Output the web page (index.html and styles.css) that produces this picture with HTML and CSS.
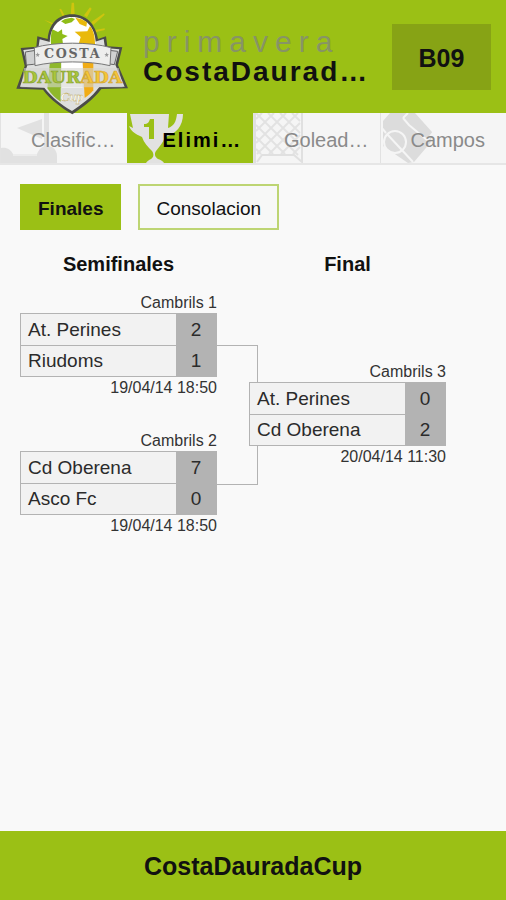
FILE: index.html
```html
<!DOCTYPE html>
<html lang="es">
<head>
<meta charset="utf-8">
<meta name="viewport" content="width=device-width, initial-scale=1">
<title>CostaDauradaCup</title>
<link rel="stylesheet" href="styles.css">
</head>
<body>
<header class="header">
  <svg class="logo" viewBox="0 0 420 345" role="img" aria-label="Costa Daurada Cup">
    <g fill="#cfc40f">
      <path d="M215 8h7l2 36h-12zM178 28l5-2 12 22-6 3zM252 46l18-24 5 4-14 26zM274 66l38-26 2 4-34 31zM286 90l28-5v5l-28 7zM132 59l34 13-3 5z"/>
    </g>
    <path d="M62 144l47-4 3-31 31 8c4-46 32-74 73-74s70 28 78 74l24-8 4 30 45 3-13 53 30 70-80 2c-24 32-58 56-87 76-33-20-66-44-88-74l-80-3 25-68z" fill="#4b4c48"/>
    <path d="M70 150l45-5 4-27 31 8h133l28-9 4 27 43 4-12 46 28 66-76 1c-23 32-56 54-82 72-31-19-61-41-83-70l-73-3 22-64z" fill="#dedfde"/>
    <path d="M149 132c0-50 27-81 67-81s71 31 71 81z" fill="#fff"/>
    <path d="M157 88l17 8 12-8 1 14 16 6-16 9 2 15h-36c-2-16 0-30 4-44zM183 64l12-7 20-4 10 4-10 10-19 5z" fill="#8fbd18"/>
    <path d="M226 53c14 2 25 6 35 14l-2 13-20-8zM270 78l-8 16-38 1 18 16-6 21h49c0-22-4-40-15-54z" fill="#e9b90b"/>
    <path d="M150 184h34v79h-2v42c-16-10-28-22-40-40z" fill="#8fb82b"/>
    <path d="M184 184h64v79h-64z" fill="#fff"/>
    <path d="M248 183h32v88c-8 10-16 17-26 23z" fill="#f1ac16"/>
    <path d="M76 156l37-6c55-24 151-24 206 0l34 4-10 40-26-4c-60-14-160-14-216 3l-22 2z" fill="#d0d1d1" stroke="#666" stroke-width="3"/>
    <path d="M103 143c61-18 167-18 230 0l-3 54c-62-15-164-15-225 0z" fill="#eeeeed" stroke="#777" stroke-width="3"/>
    <path d="M113 157l2 5 5 1-4 3 1 5-4-3-4 3 1-5-4-3 5-1zM320 157l2 5 5 1-4 3 1 5-4-3-4 3 1-5-4-3 5-1z" fill="#999"/>
    <text class="logo-costa" x="218" y="173">COSTA</text>
    <path d="M72 204h284l12 58H64z" fill="#d5d6d2" opacity=".6"/>
    <text class="logo-name" x="217" y="248"><tspan class="logo-green">DAUR</tspan><tspan class="logo-gold">ADA</tspan></text>
    <text class="logo-cup" x="216" y="302">Cup</text>
  </svg>
  <div class="heading">
    <p class="season">primavera</p>
    <h1 class="title">CostaDaurad…</h1>
  </div>
  <button class="category" type="button">B09</button>
</header>

<nav class="tabs">
  <a class="tab" href="#clasificacion">
    <svg class="tab-icon" viewBox="0 0 60 51" aria-hidden="true">
      <path d="M43 0h5v34h-5zM41 6v20L16 15zM0 35c6-1 10 2 12 6h24c2-5 5-8 10-8 6 0 10 4 10 10v8H0z" fill="#e1e1e1"/>
      <path d="M12 42h24" stroke="#ececec" stroke-width="2"/>
    </svg>
    <span>Clasific…</span>
  </a>
  <a class="tab tab-active" href="#eliminatorias" aria-current="page">
    <svg class="tab-icon" viewBox="0 0 60 51" aria-hidden="true">
      <path d="M2 1h39l-1 14c6-2 8-6 9-14h6c0 12-7 20-18 23-2 6-6 10-9 14-2 3-1 6 2 8 3 1 5 2 6 4H18c1-2 3-3 5-4 3-2 3-5 1-8-4-4-8-8-10-14C7 21 3 18 1 13l4 2z" fill="#e2e2e1"/>
      <path d="M16 11c4 0 5-2 6-5h4v20h-5V14h-5z" fill="#9bc015"/>
    </svg>
    <span>Elimi…</span>
  </a>
  <a class="tab" href="#goleadores">
    <svg class="tab-icon" viewBox="0 0 60 51" aria-hidden="true">
      <path d="M2 0l42 42M14 0l32 32M26 0l20 20M38 0l8 8M2 12l29 29M2 24l17 17M2 36l5 5M8 0L2 6M20 0L2 18M32 0L2 30M44 0L3 41M46 10L15 41M46 22L27 41M46 34l-7 7" fill="none" stroke="#e2e2e2" stroke-width="2"/>
      <path d="M1 0v51M48 0v49l-8-7H8l-5 7" fill="none" stroke="#e0e0e0" stroke-width="2"/>
    </svg>
    <span>Golead…</span>
  </a>
  <a class="tab" href="#campos">
    <svg class="tab-icon" viewBox="0 0 60 51" aria-hidden="true">
      <path d="M2 8L9 0h25l17 19-1 10-17 20-6 1L2 33z" fill="#dcdcdc"/>
      <g fill="none" stroke="#f5f5f5" stroke-width="2">
        <circle cx="14" cy="29" r="11"/>
        <path d="M6 21l26 28M0 14l5 6M22 5l6 7 18 15M22 5l5-5M46 27l6-7"/>
      </g>
    </svg>
    <span>Campos</span>
  </a>
</nav>

<main class="main">
  <div class="phases">
    <button class="phase phase-active" type="button">Finales</button>
    <button class="phase" type="button">Consolacion</button>
  </div>

  <div class="bracket">
    <h2 class="round">Semifinales</h2>
    <h2 class="round round-last">Final</h2>

    <div class="matches">
      <section class="match">
        <table class="score">
          <caption>Cambrils 1</caption>
          <tr><th scope="row">At. Perines</th><td>2</td></tr>
          <tr><th scope="row">Riudoms</th><td>1</td></tr>
        </table>
        <p class="date">19/04/14 18:50</p>
      </section>
      <section class="match">
        <table class="score">
          <caption>Cambrils 2</caption>
          <tr><th scope="row">Cd Oberena</th><td>7</td></tr>
          <tr><th scope="row">Asco Fc</th><td>0</td></tr>
        </table>
        <p class="date">19/04/14 18:50</p>
      </section>
    </div>
    <div class="connector"></div>
    <div class="matches matches-final">
      <section class="match">
        <table class="score">
          <caption>Cambrils 3</caption>
          <tr><th scope="row">At. Perines</th><td>0</td></tr>
          <tr><th scope="row">Cd Oberena</th><td>2</td></tr>
        </table>
        <p class="date">20/04/14 11:30</p>
      </section>
    </div>
  </div>
</main>

<footer class="footer">CostaDauradaCup</footer>
</body>
</html>
```
FILE: styles.css
```css
* {
  box-sizing: border-box;
}

body {
  margin: 0;
  min-height: 100vh;
  display: flex;
  flex-direction: column;
  background: #f9f9f9;
  color: #111;
  font-family: "Liberation Sans", Arial, sans-serif;
}

h1,
h2,
p {
  margin: 0;
}

button {
  font-family: inherit;
  color: inherit;
  border: 0;
  border-radius: 0;
}

.header {
  display: flex;
  align-items: flex-start;
  padding-right: 15px;
  background: #9bc015;
}

.logo {
  position: relative;
  z-index: 1;
  flex: none;
  width: 140px;
  height: 115px;
  margin-bottom: -2px;
}

.logo-costa {
  font: bold 38px "DejaVu Serif", serif;
  letter-spacing: 5px;
  text-anchor: middle;
  fill: #666;
}

.logo-name {
  font: bold 52px "DejaVu Serif", serif;
  text-anchor: middle;
  stroke-width: 2px;
}

.logo-green {
  fill: #a9c63c;
  stroke: #86a02f;
}

.logo-gold {
  fill: #f5c638;
  stroke: #cfa22f;
}

.logo-cup {
  font: italic bold 40px "Liberation Serif", serif;
  text-anchor: middle;
  fill: #fff;
  stroke: #b5a04a;
  stroke-width: 1px;
}

.heading {
  flex: 1;
  min-width: 0;
  padding: 27px 0 0 3px;
  white-space: nowrap;
}

.season {
  font-size: 30px;
  line-height: 30px;
  letter-spacing: 7px;
  color: #879465;
}

.title {
  font-size: 28px;
  line-height: 30px;
  letter-spacing: 2px;
}

.category {
  flex: none;
  width: 99px;
  height: 66px;
  margin-top: 24px;
  padding-top: 4px;
  background: #87a315;
  font-size: 25px;
  font-weight: bold;
}

.tabs {
  display: grid;
  grid-template-columns: repeat(4, 1fr);
  background: #f5f5f5;
  border-bottom: 2px solid #e6e6e6;
}

.tab {
  position: relative;
  height: 50px;
  padding-left: 30px;
  overflow: hidden;
  border-left: 1px solid #e2e2e2;
  font-size: 20px;
  line-height: 54px;
  color: #8a8a8a;
  text-decoration: none;
  white-space: nowrap;
}

.tab span {
  position: relative;
}

.tab-icon {
  position: absolute;
  top: 0;
  left: 0;
  width: 60px;
  height: 51px;
}

.tab-active {
  padding-left: 35px;
  border-color: #9bc015;
  background: #9bc015;
  color: #000;
  font-weight: bold;
  letter-spacing: 2px;
}

.main {
  flex: 1;
  padding: 19px 60px 20px 20px;
}

.phases {
  display: flex;
  gap: 17px;
}

.phase {
  height: 46px;
  padding: 3px 16px 0;
  border: 2px solid #bdd573;
  background: #f7f8f7;
  font-size: 19px;
}

.phase-active {
  border-color: #9bc015;
  background: #9bc015;
  font-weight: bold;
}

.bracket {
  display: grid;
  grid-template-columns: 1fr 32px 1fr;
  margin-top: 22px;
}

.round {
  font-size: 20px;
  line-height: 24px;
  text-align: center;
}

.round-last {
  grid-column: 3;
}

.matches {
  display: flex;
  flex-direction: column;
  gap: 32px;
  margin-top: 17px;
}

.matches-final {
  position: relative;
  justify-content: center;
}

.score {
  width: 100%;
  border-spacing: 0;
  border: 1px solid #b3b3b3;
  font-size: 19px;
}

.score caption,
.date {
  font-size: 16px;
  line-height: 20px;
  text-align: right;
  color: #333;
}

.date {
  line-height: 22px;
}

.score th,
.score td {
  height: 31px;
  padding: 0;
  color: #2b2b2b;
  font-weight: normal;
}

.score th {
  padding-left: 7px;
  background: #f2f2f2;
  text-align: left;
}

.score td {
  width: 40px;
  background: #b3b3b3;
  text-align: center;
}

.score tr + tr th {
  border-top: 1px solid #b3b3b3;
}

.connector {
  margin: 69px -9px 52px 0;
  border: 1px solid #b3b3b3;
  border-left: 0;
}

.footer {
  padding-top: 2px;
  background: #9bc015;
  font-size: 25px;
  font-weight: bold;
  line-height: 67px;
  text-align: center;
}
```
